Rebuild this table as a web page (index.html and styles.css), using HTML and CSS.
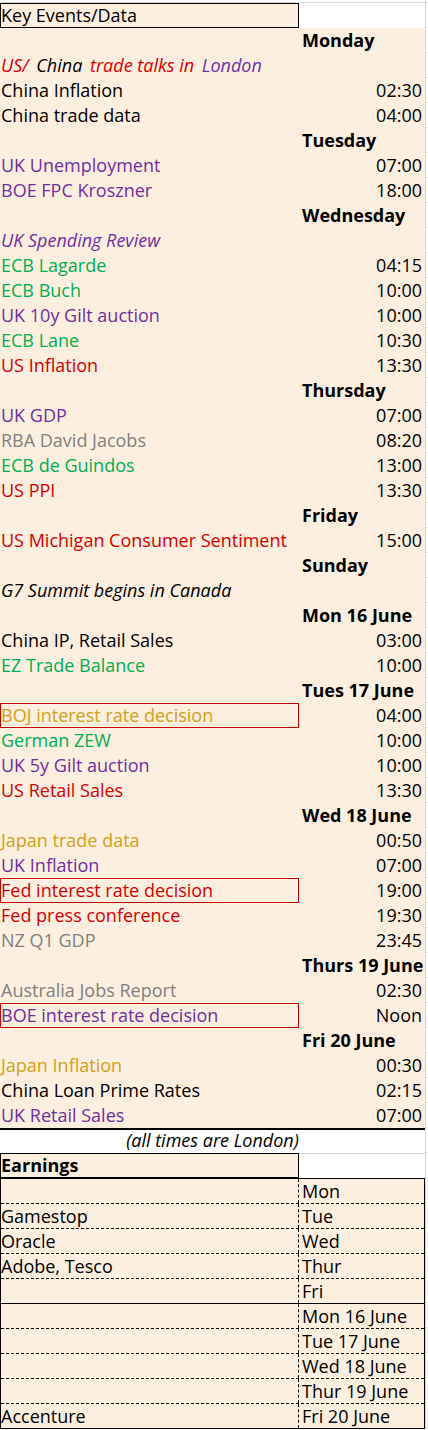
FILE: index.html
```html
<!DOCTYPE html>
<html>
<head>
<meta charset="utf-8">
<link rel="stylesheet" href="styles.css">
</head>
<body>
<div class="page">
<div class="sheet">
  <div class="topstrip"></div>
  <div class="row">
    <div class="a boxed-black">Key Events/Data</div>
    <div class="b blank"></div>
  </div>
  <div class="events">
    <div class="row"><div class="a"></div><div class="b day">Monday</div></div>
    <div class="row"><div class="a it"><span class="red">US/</span> <span class="gap">China</span> <span class="red gap">trade talks in</span> <span class="purple gap">London</span></div><div class="b"></div></div>
    <div class="row"><div class="a">China Inflation</div><div class="b t">02:30</div></div>
    <div class="row"><div class="a">China trade data</div><div class="b t">04:00</div></div>
    <div class="row"><div class="a"></div><div class="b day">Tuesday</div></div>
    <div class="row"><div class="a purple">UK Unemployment</div><div class="b t">07:00</div></div>
    <div class="row"><div class="a purple">BOE FPC Kroszner</div><div class="b t">18:00</div></div>
    <div class="row"><div class="a"></div><div class="b day">Wednesday</div></div>
    <div class="row"><div class="a purple it">UK Spending Review</div><div class="b"></div></div>
    <div class="row"><div class="a green">ECB Lagarde</div><div class="b t">04:15</div></div>
    <div class="row"><div class="a green">ECB Buch</div><div class="b t">10:00</div></div>
    <div class="row"><div class="a purple">UK 10y Gilt auction</div><div class="b t">10:00</div></div>
    <div class="row"><div class="a green">ECB Lane</div><div class="b t">10:30</div></div>
    <div class="row"><div class="a red">US Inflation</div><div class="b t">13:30</div></div>
    <div class="row"><div class="a"></div><div class="b day">Thursday</div></div>
    <div class="row"><div class="a purple">UK GDP</div><div class="b t">07:00</div></div>
    <div class="row"><div class="a gray">RBA David Jacobs</div><div class="b t">08:20</div></div>
    <div class="row"><div class="a green">ECB de Guindos</div><div class="b t">13:00</div></div>
    <div class="row"><div class="a red">US PPI</div><div class="b t">13:30</div></div>
    <div class="row"><div class="a"></div><div class="b day">Friday</div></div>
    <div class="row"><div class="a red">US Michigan Consumer Sentiment</div><div class="b t">15:00</div></div>
    <div class="row"><div class="a"></div><div class="b day">Sunday</div></div>
    <div class="row"><div class="a it">G7 Summit begins in Canada</div><div class="b"></div></div>
    <div class="row"><div class="a"></div><div class="b day">Mon 16 June</div></div>
    <div class="row"><div class="a">China IP, Retail Sales</div><div class="b t">03:00</div></div>
    <div class="row"><div class="a green">EZ Trade Balance</div><div class="b t">10:00</div></div>
    <div class="row"><div class="a"></div><div class="b day">Tues 17 June</div></div>
    <div class="row"><div class="a gold boxed">BOJ interest rate decision</div><div class="b t">04:00</div></div>
    <div class="row"><div class="a green">German ZEW</div><div class="b t">10:00</div></div>
    <div class="row"><div class="a purple">UK 5y Gilt auction</div><div class="b t">10:00</div></div>
    <div class="row"><div class="a red">US Retail Sales</div><div class="b t">13:30</div></div>
    <div class="row"><div class="a"></div><div class="b day">Wed 18 June</div></div>
    <div class="row"><div class="a gold">Japan trade data</div><div class="b t">00:50</div></div>
    <div class="row"><div class="a purple">UK Inflation</div><div class="b t">07:00</div></div>
    <div class="row"><div class="a red boxed">Fed interest rate decision</div><div class="b t">19:00</div></div>
    <div class="row"><div class="a red">Fed press conference</div><div class="b t">19:30</div></div>
    <div class="row"><div class="a gray">NZ Q1 GDP</div><div class="b t">23:45</div></div>
    <div class="row"><div class="a"></div><div class="b day">Thurs 19 June</div></div>
    <div class="row"><div class="a gray">Australia Jobs Report</div><div class="b t">02:30</div></div>
    <div class="row"><div class="a purple boxed">BOE interest rate decision</div><div class="b t">Noon</div></div>
    <div class="row"><div class="a"></div><div class="b day">Fri 20 June</div></div>
    <div class="row"><div class="a gold">Japan Inflation</div><div class="b t">00:30</div></div>
    <div class="row"><div class="a">China Loan Prime Rates</div><div class="b t">02:15</div></div>
    <div class="row"><div class="a purple">UK Retail Sales</div><div class="b t">07:00</div></div>
  </div>
  <div class="note">(all times are London)</div>
  <div class="row">
    <div class="a boxed-black bold">Earnings</div>
    <div class="b blank gtop"></div>
  </div>
  <div class="earnings">
    <div class="erow"><div class="ea"></div><div class="eb">Mon</div></div>
    <div class="erow"><div class="ea">Gamestop</div><div class="eb">Tue</div></div>
    <div class="erow"><div class="ea">Oracle</div><div class="eb">Wed</div></div>
    <div class="erow"><div class="ea">Adobe, Tesco</div><div class="eb">Thur</div></div>
    <div class="erow solid"><div class="ea"></div><div class="eb">Fri</div></div>
    <div class="erow"><div class="ea"></div><div class="eb">Mon 16 June</div></div>
    <div class="erow"><div class="ea"></div><div class="eb">Tue 17 June</div></div>
    <div class="erow"><div class="ea"></div><div class="eb">Wed 18 June</div></div>
    <div class="erow"><div class="ea"></div><div class="eb">Thur 19 June</div></div>
    <div class="erow last"><div class="ea">Accenture</div><div class="eb">Fri 20 June</div></div>
  </div>
</div>
</div>
</body>
</html>
```

FILE: styles.css
```css
html, body {
  margin: 0;
  padding: 0;
  background: #ffffff;
}
.page {
  width: 428px;
  min-height: 1430px;
  background-color: #ffffff;
  background-image: repeating-linear-gradient(to bottom, transparent 0, transparent 2px, #dadada 2px, #dadada 3px, transparent 3px, transparent 25px);
}
.sheet {
  width: 425px;
  border-right: 1px solid #d4d4d4;
  font-family: "Open Sans", "Noto Sans", sans-serif;
  font-size: 18px;
  color: #000;
  background: #fff;
}
.topstrip {
  height: 3px;
  background: linear-gradient(to bottom, #fff 0, #fff 2px, #dadada 2px, #dadada 3px);
}
.row {
  display: grid;
  grid-template-columns: 299px 126px;
  height: 25px;
  line-height: 25px;
}
.a, .b {
  white-space: nowrap;
  box-sizing: border-box;
  height: 25px;
}
.a {
  padding-left: 1px;
}
.events {
  background: #fdefe0;
  border-bottom: 2px solid #000;
}
.boxed-black {
  background: #fdefe0;
  border: 1px solid #000;
  line-height: 23px;
  padding-left: 0;
}
.blank {
  background: #fff;
}
.gtop {
  border-top: 1px solid #dadada;
}
.boxed {
  border: 1px solid #c00000;
  line-height: 23px;
  padding-left: 0;
}
.b.t {
  text-align: right;
  padding-right: 3px;
}
.b.day {
  font-weight: 700;
  padding-left: 3px;
}
.gap {
  margin-left: 3px;
}
.bold { font-weight: 700; }
.it { font-style: italic; }
.red { color: #d40000; }
.purple { color: #7030a0; }
.green { color: #00b050; }
.gray { color: #808080; }
.gold { color: #d4a017; }
.note {
  height: 23px;
  line-height: 21px;
  text-align: center;
  font-style: italic;
  background: #fff;
}
.earnings {
  border: 1px solid #000;
  background: #fdefe0;
}
.erow {
  display: grid;
  grid-template-columns: 298px 125px;
  height: 25px;
  box-sizing: border-box;
  border-bottom: 1px dashed #000;
  line-height: 24px;
}
.erow.solid {
  border-bottom: 1px solid #000;
}
.erow.last {
  border-bottom: 0;
  height: 24px;
}
.ea {
  border-right: 1px dashed #000;
  white-space: nowrap;
}
.eb {
  padding-left: 3px;
  white-space: nowrap;
}
```
